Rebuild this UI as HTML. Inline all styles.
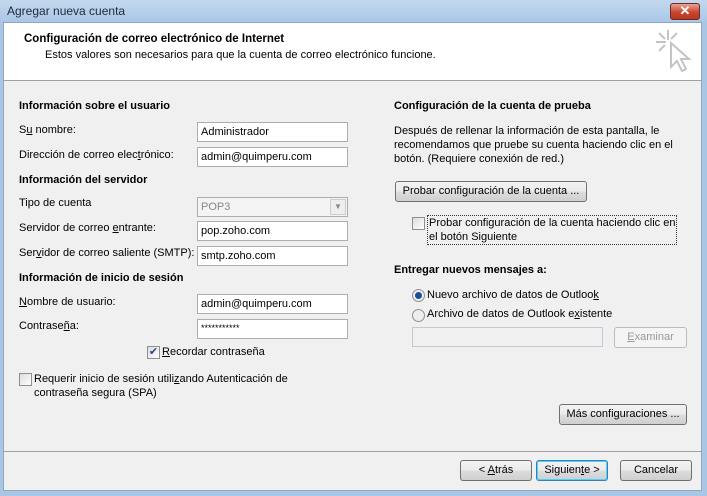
<!DOCTYPE html><html><head><style>
*{margin:0;padding:0;box-sizing:border-box}
body{width:707px;height:496px;overflow:hidden;background:#a9c6e4;font-family:"Liberation Sans",sans-serif;font-size:11px;color:#000;position:relative}
.a{position:absolute;white-space:nowrap}
.title{position:absolute;left:0;top:0;width:707px;height:22px;background:linear-gradient(#c3d8ee,#aac7e6);}
.close{position:absolute;left:670px;top:3px;width:30px;height:17px;border:1px solid #6d2a22;border-radius:3px;background:linear-gradient(#e8a394,#c9462f 55%,#b63620);color:#fff;font-weight:bold;text-align:center;line-height:14px;font-size:13px}
.client{position:absolute;left:3px;top:22px;width:699px;height:469px;background:#f0f0f0;border:1px solid #8ea8c4}
.head{position:absolute;left:0;top:0;width:697px;height:58px;background:#fff;border-bottom:1px solid #a0a0a0}
.in{position:absolute;height:20px;border:1px solid #abadb3;background:#fff;padding:3px 3px;font-size:11px}
.b{font-weight:bold}
.btn{position:absolute;height:21px;border:1px solid #707070;border-radius:3px;background:linear-gradient(#f2f2f2,#ebebeb 50%,#dddddd 51%,#cfcfcf);text-align:center;line-height:19px}
.cb{position:absolute;width:13px;height:13px;border:1px solid #8f8f8f;background:linear-gradient(135deg,#dcdcdc,#fff)}
.rd{position:absolute;width:13px;height:13px;border-radius:50%;border:1px solid #8f8f8f;background:#eee}
u{text-decoration:underline}
</style></head><body>
<div class="title"><div class="a" style="left:7px;top:4px;font-size:12px;color:#1e2a3a">Agregar nueva cuenta</div><div class="close">✕</div></div>
<div class="client">
<div class="head">
<div class="a b" style="left:20px;top:10px;font-size:11.5px">Configuración de correo electrónico de Internet</div>
<div class="a" style="left:41px;top:26px">Estos valores son necesarios para que la cuenta de correo electrónico funcione.</div>
<svg class="a" style="left:650px;top:5px" width="40" height="50" viewBox="0 0 40 50" fill="none" stroke="#c4c4c4" stroke-width="2"><path d="M14 2v10M2 14h10M5 5l6 6M23 5l-6 6M5 23l6-6"/><path d="M17 15l0 24 6-6 5 10 4-2-5-10 8 0z" fill="#fff"/></svg>
</div>
<div class="a b" style="left:15px;top:77px">Información sobre el usuario</div>
<div class="a" style="left:15px;top:101px">S<u>u</u> nombre:</div>
<div class="in" style="left:193px;top:99px;width:151px">Administrador</div>
<div class="a" style="left:15px;top:126px">Dirección de correo elec<u>t</u>rónico:</div>
<div class="in" style="left:193px;top:124px;width:151px">admin@quimperu.com</div>
<div class="a b" style="left:15px;top:151px">Información del servidor</div>
<div class="a" style="left:15px;top:174px">Tipo de cuenta</div>
<div class="in" style="left:193px;top:174px;width:151px;background:#f4f4f4;color:#888">POP3<div style="position:absolute;right:1px;top:1px;width:16px;height:16px;border:1px solid #ccc;background:#eee;font-size:8px;text-align:center;line-height:14px">▼</div></div>
<div class="a" style="left:15px;top:199px">Servidor de correo <u>e</u>ntrante:</div>
<div class="in" style="left:193px;top:198px;width:151px">pop.zoho.com</div>
<div class="a" style="left:15px;top:224px">Ser<u>v</u>idor de correo saliente (SMTP):</div>
<div class="in" style="left:193px;top:223px;width:151px">smtp.zoho.com</div>
<div class="a b" style="left:15px;top:249px">Información de inicio de sesión</div>
<div class="a" style="left:15px;top:273px"><u>N</u>ombre de usuario:</div>
<div class="in" style="left:193px;top:271px;width:151px">admin@quimperu.com</div>
<div class="a" style="left:15px;top:297px">Contrase<u>ñ</u>a:</div>
<div class="in" style="left:193px;top:296px;width:151px;font-size:9px">***********</div>
<div class="cb" style="left:143px;top:323px;font-size:11px;line-height:11px;color:#2a4a8a;text-align:center">✔</div>
<div class="a" style="left:158px;top:323px"><u>R</u>ecordar contraseña</div>
<div class="cb" style="left:15px;top:350px"></div>
<div class="a" style="left:30px;top:349px;line-height:14px">Requerir inicio de sesión utili<u>z</u>ando Autenticación de<br>contraseña segura (SPA)</div>

<div class="a b" style="left:390px;top:77px">Configuración de la cuenta de prueba</div>
<div class="a" style="left:390px;top:101px;line-height:14px">Después de rellenar la información de esta pantalla, le<br>recomendamos que pruebe su cuenta haciendo clic en el<br>botón. (Requiere conexión de red.)</div>
<div class="btn" style="left:391px;top:158px;width:192px">Probar confi<u>g</u>uración de la cuenta ...</div>
<div class="cb" style="left:408px;top:194px"></div>
<div class="a" style="left:423px;top:192px;line-height:14px;border:1px dotted #333;padding:0 1px">Probar configuración de la cuenta haciendo clic en<br>el botón Siguiente</div>
<div class="a b" style="left:390px;top:241px">Entregar nuevos mensajes a:</div>
<div class="rd" style="left:408px;top:266px"><div style="position:absolute;left:2px;top:2px;width:7px;height:7px;border-radius:50%;background:#1f4e99"></div></div>
<div class="a" style="left:423px;top:266px">Nuevo archivo de datos de Outloo<u>k</u></div>
<div class="rd" style="left:408px;top:286px"></div>
<div class="a" style="left:423px;top:285px">Archivo de datos de Outlook e<u>x</u>istente</div>
<div class="in" style="left:408px;top:304px;width:191px;background:#f0f0f0;border-color:#c0cad6"></div>
<div class="btn" style="left:610px;top:304px;width:73px;color:#999;border-color:#bbb;background:#f4f4f4"><u>E</u>xaminar</div>
<div class="btn" style="left:555px;top:381px;width:128px">Más confi<u>g</u>uraciones ...</div>
<div style="position:absolute;left:0;top:428px;width:697px;height:1px;background:#a0a0a0"></div>
<div class="btn" style="left:456px;top:437px;width:72px">&lt; <u>A</u>trás</div>
<div class="btn" style="left:532px;top:437px;width:72px;border-color:#3c7fb1;box-shadow:inset 0 0 0 1px #48d4ff">Siguien<u>t</u>e &gt;</div>
<div class="btn" style="left:616px;top:437px;width:72px">Cancelar</div>
</div>
</body></html>
